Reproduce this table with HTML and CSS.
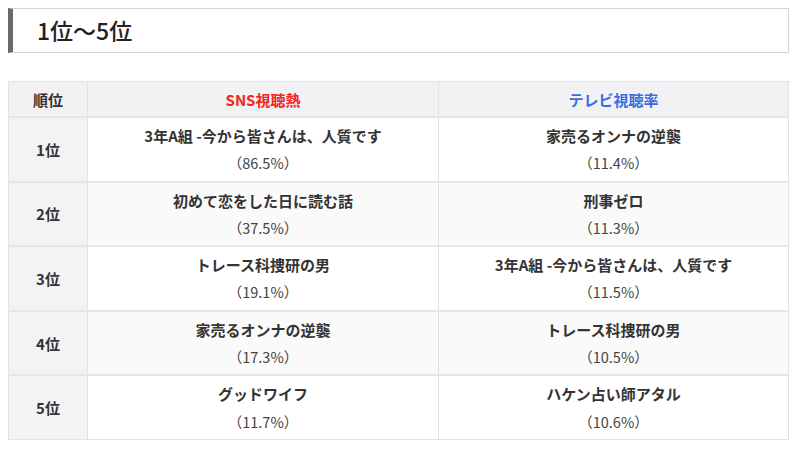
FILE: index.html
```html
<!DOCTYPE html>
<html lang="ja">
<head>
<meta charset="utf-8">
<link rel="stylesheet" href="styles.css">
</head>
<body>
<h2 class="heading">1位～5位</h2>
<table class="rank">
  <thead>
    <tr>
      <th class="col-rank">順位</th>
      <th class="col-sns">SNS視聴熱</th>
      <th class="col-tv">テレビ視聴率</th>
    </tr>
  </thead>
  <tbody>
    <tr>
      <th>1位</th>
      <td><b>3年A組 -今から皆さんは、人質です</b><br>（86.5%）</td>
      <td><b>家売るオンナの逆襲</b><br>（11.4%）</td>
    </tr>
    <tr>
      <th>2位</th>
      <td><b>初めて恋をした日に読む話</b><br>（37.5%）</td>
      <td><b>刑事ゼロ</b><br>（11.3%）</td>
    </tr>
    <tr>
      <th>3位</th>
      <td><b>トレース科捜研の男</b><br>（19.1%）</td>
      <td><b>3年A組 -今から皆さんは、人質です</b><br>（11.5%）</td>
    </tr>
    <tr>
      <th>4位</th>
      <td><b>家売るオンナの逆襲</b><br>（17.3%）</td>
      <td><b>トレース科捜研の男</b><br>（10.5%）</td>
    </tr>
    <tr>
      <th>5位</th>
      <td><b>グッドワイフ</b><br>（11.7%）</td>
      <td><b>ハケン占い師アタル</b><br>（10.6%）</td>
    </tr>
  </tbody>
</table>
</body>
</html>
```
FILE: styles.css
```css
html, body {
  margin: 0;
  padding: 0;
  background: #fff;
}
body {
  padding: 8px;
  font-family: "Noto Sans CJK JP", "Noto Sans", sans-serif;
  color: #333;
}
.heading {
  margin: 0;
  height: 45px;
  box-sizing: border-box;
  border: 1px solid #d4d4d4;
  border-left: 5px solid #6a6a6a;
  padding-left: 24px;
  font-size: 23px;
  font-weight: 500;
  line-height: 43px;
  width: 781px;
  color: #222;
}
.rank {
  margin-top: 28px;
  width: 781px;
  border-collapse: collapse;
  font-size: 14.5px;
  table-layout: fixed;
}
.rank th, .rank td {
  border: 1px solid #e2e2e2;
  text-align: center;
  vertical-align: middle;
}
.rank thead th {
  background: #f2f2f4;
  height: 34px;
  padding: 0;
  font-weight: 700;
  font-size: 15px;
}
.col-rank { width: 78px; }
.col-sns { width: 350px; color: #f2261a; }
.col-tv { color: #3b6de0; }
.rank tbody th {
  background: #f3f3f5;
  font-weight: 700;
  font-size: 15px;
  color: #333;
}
.rank tbody td {
  padding: 4px 8px;
  line-height: 27.3px;
  color: #444;
}
.rank tbody td b {
  color: #333;
  font-size: 15px;
}
.rank tbody tr:nth-child(even) td {
  background: #fafafa;
}
.rank tbody tr {
  border-top: 2px solid #e6e6e6;
}
```
